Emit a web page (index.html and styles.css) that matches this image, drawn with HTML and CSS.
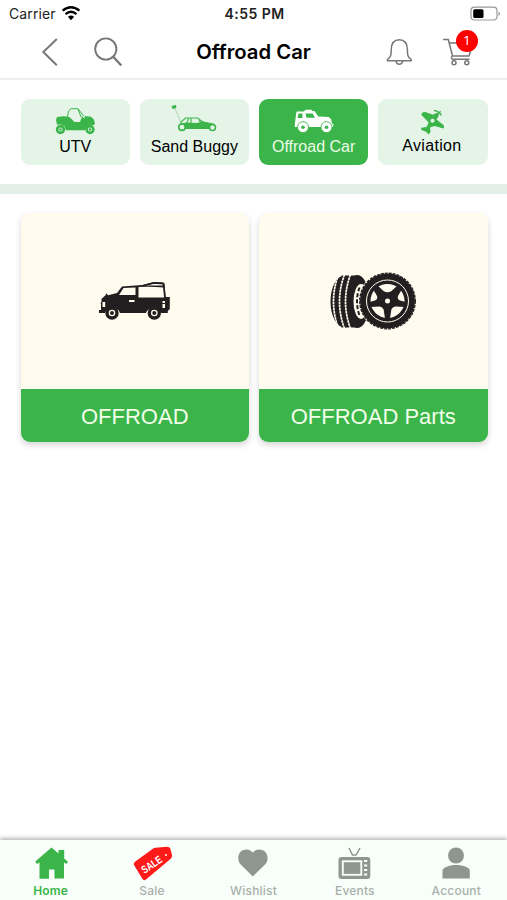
FILE: index.html
```html
<!DOCTYPE html>
<html lang="en">
<head>
<meta charset="utf-8">
<title>Offroad Car</title>
<link rel="stylesheet" href="styles.css">
</head>
<body>
<div class="app">
  <header class="top">
    <div class="status">
      <span class="carrier"><span class="carrier-name">Carrier</span>
        <svg width="20" height="16" viewBox="61 5.500 20 16" fill="none" stroke="#000" stroke-width="2.300"><path d="M62.600 10.200Q71 3.300 79.400 10.200"/><path d="M65.600 13.600Q71 9 76.400 13.600"/><path d="M71 19.700 67.900 16.300Q71 13.700 74.100 16.300Z" fill="#000" stroke="none"/></svg>
      </span>
      <span class="clock">4:55 PM</span>
      <svg class="battery" width="31" height="16" viewBox="469 5.500 31 16"><rect x="471" y="6.700" width="26" height="12.800" rx="3.500" fill="#fff" stroke="#999" stroke-width="1.200"/><rect x="473.200" y="8.700" width="10.300" height="8.800" rx="1.500"/><path d="M498.500 11v4.500Q500 14.600 500 13.200T498.500 11Z" fill="#999"/></svg>
    </div>
    <nav class="nav">
      <div class="nav-side nav-start">
        <svg width="20" height="32" viewBox="40 36 20 32" fill="none" stroke="#777" stroke-width="2"><path d="M56.800 39 43.300 52 56.800 65.300"/></svg>
        <svg class="search" width="32" height="32" viewBox="92 36 32 32" fill="none" stroke="#777" stroke-width="1.900"><circle cx="105.800" cy="49" r="10.600"/><path d="M113 56.500 121.300 65.500" stroke-width="2.300"/></svg>
      </div>
      <h1 class="title">Offroad Car</h1>
      <div class="nav-side nav-end">
        <svg width="28" height="30" viewBox="385 37 28 30" fill="none" stroke="#777" stroke-width="1.500"><path d="M387.500 60.700v-1.400c3.600-2.200 3.700-5 3.700-9.300 0-6.400 2.700-10.300 8.100-10.300s8.100 3.900 8.100 10.300c0 4.300.1 7.100 3.700 9.300v1.400Z"/><path d="M396 61c.5 4.300 6.100 4.300 6.600 0"/></svg>
        <div class="cart">
          <svg width="34" height="30" viewBox="442 37 34 30" fill="none" stroke="#777" stroke-width="1.500"><path d="M443 39.500h5.300l4.200 16.500h16.500l1.500-5M449.300 43h18M452.500 56c-2 1.500-1 3.300.8 3.300h16.200"/><circle cx="454" cy="62.700" r="2"/><circle cx="466.800" cy="62.700" r="2"/></svg>
          <span class="badge">1</span>
        </div>
      </div>
    </nav>
  </header>

  <section class="tabs">
    <div class="tab">
      <svg width="44" height="31" viewBox="53 104.500 44 31"><g fill="none" stroke="#3bb54a" stroke-width="1"><path d="M67.500 116 68.500 110.500 71 108.200h7L84 116M78 108.500l3 8"/></g><path fill="#3bb54a" d="M56 119.500 57 116.500l6-.8 4.500.3 2 .5 5 5h5.500L82 116l2.500 2 .5-2.500 6 .8 3 3 1 4-1.500 1.500-3.500-.5-4 3-1 2.500H66l-1.500-4-4-2-3.500.5-.5-2.500Z"/><circle cx="60.500" cy="129" r="3.400" fill="#e4f4e7" stroke="#3bb54a" stroke-width="2.600"/><circle cx="90" cy="129" r="3.400" fill="#e4f4e7" stroke="#3bb54a" stroke-width="2.600"/><circle cx="60.500" cy="129" r="1.200" fill="#3bb54a"/><circle cx="90" cy="129" r="1.200" fill="#3bb54a"/></svg>
      <span>UTV</span>
    </div>
    <div class="tab">
      <svg width="52" height="31" viewBox="168.500 104.500 52 31"><path d="M175 107 182 123" stroke="#a5c8ab" stroke-width=".8"/><path d="M172 105.500l4.500-1.200.3 3-3.500 1.400Z" fill="#3bb54a"/><path d="M181 122l5-4.500h12l6 4.500M189 118l-2 5M191.500 118v5M199 118l2 4" fill="none" stroke="#3bb54a" stroke-width="1.100"/><path d="M180 123 188 122l9 .5 7-1.500 10 2 2 2-6 3.500H185Z" fill="#3bb54a"/><circle cx="182.500" cy="126.700" r="3.200" fill="#e4f4e7" stroke="#3bb54a" stroke-width="1.600"/><circle cx="213" cy="127" r="3" fill="#e4f4e7" stroke="#3bb54a" stroke-width="1.500"/></svg>
      <span>Sand Buggy</span>
    </div>
    <div class="tab tab-active">
      <svg width="44" height="31" viewBox="292 104.500 44 31"><path fill="#fff" fill-rule="evenodd" d="M296.300 112 297 111h7l1.500-1.700h6l.8 1.300h2.200l3.800 5.500 10.500.5 2.500 2.500.6 4 1.500.5-.3 3H294.700l.2-3.500ZM298.500 113l-1 4.500h5V113ZM305.500 113l1 4.300h8.500L312.500 113Z"/><g fill="#fff" stroke="#3bb54a" stroke-width=".9"><circle cx="303" cy="126.700" r="5.500"/><circle cx="326.500" cy="126.700" r="5.500"/></g><circle cx="303" cy="126.700" r="1.800" fill="#3bb54a"/><circle cx="326.500" cy="126.700" r="1.800" fill="#3bb54a"/></svg>
      <span>Offroad Car</span>
    </div>
    <div class="tab">
      <svg width="32" height="31" viewBox="417 104.500 32 31"><path fill="#3bb54a" d="M421.500 114.500 421.800 112.500 424.500 111.300 433 114.300Q436 112 438.300 112.800L439 114Q438.500 117 436.500 119L443.500 124.500Q444.800 126.500 443.500 128L434.500 125.500 430 127 430.500 131.500 428.500 134 426 131.200 421 129.300 421.500 127.300 426.500 126.500 428.700 122Z"/><circle cx="432.500" cy="120.300" r="2" fill="#e4f4e7"/><path d="M434 110q4.500.2 7.500 5M437.500 113l3.300-2" fill="none" stroke="#3bb54a" stroke-width="1.300"/></svg>
      <span class="raised">Aviation</span>
    </div>
  </section>

  <main class="cards">
    <article class="card">
      <div class="card-art">
        <svg width="84" height="48" viewBox="93 277 84 48"><path fill="#231f20" fill-rule="evenodd" d="M99 310h2V304l-.5-1 1-1V299l2-2 2-1.700.8-2 1.700 2L117 293l5-6.500 20-1.500 12-3 9 .5 1.500 2 1 12.500V297h4.300v12l-2 2v2h-7q-3-5.500-8-5t-7 5H120q-2-5.500-7.500-5.500T105 313H99ZM119 295h16.500v-7.500l-12 .5ZM138.500 287V297.500h26l-.7-10q-12-1-25.300-.5ZM145 285.500h18l-.6-2h-8Z"/><path d="M144 285.500 154 282.800 163.500 283.500 165 298" fill="none" stroke="#231f20" stroke-width="1.800"/><path fill="#fffcef" d="M129 300h5.500v2H129ZM102.500 302h2.700v5h-2.700ZM162.500 301h2.500v2h-2.500ZM162.500 304h2.500v4h-2.500Z"/><circle cx="112" cy="313" r="5" fill="#fffcef" stroke="#231f20" stroke-width="3.400"/><circle cx="154.300" cy="313" r="5" fill="#fffcef" stroke="#231f20" stroke-width="3.400"/><circle cx="112" cy="313" r="2" fill="#231f20"/><circle cx="154.300" cy="313" r="2" fill="#231f20"/></svg>
      </div>
      <h2 class="card-label">OFFROAD</h2>
    </article>
    <article class="card">
      <div class="card-art">
        <svg width="96" height="64" viewBox="325.500 269.500 96 64"><g fill="#231f20"><ellipse cx="345" cy="302" rx="14" ry="26"/><path d="M342 276h16v52h-16Z"/><ellipse cx="358" cy="302" rx="12" ry="26.500"/></g><ellipse cx="361.500" cy="302" rx="7.500" ry="17.500" fill="#fffcef"/><path d="M360 288q-5 14 0 28" fill="none" stroke="#231f20" stroke-width="2" stroke-dasharray="4 2"/><g fill="none" stroke="#fffcef" stroke-width="1.700" stroke-dasharray="2.600 .5"><path d="M339 275Q329 302 339 329M345 275Q335 302 345 329M351 275Q341 302 351 329"/></g><circle cx="388" cy="301.500" r="29" fill="#fffcef"/><circle cx="388" cy="301.500" r="27.500" fill="#231f20"/><circle cx="388" cy="301.500" r="27.800" fill="none" stroke="#231f20" stroke-width="1.300" stroke-dasharray="3 1"/><circle cx="388" cy="301.500" r="21" fill="none" stroke="#fffcef"/><circle cx="388" cy="301.500" r="17" fill="#fffcef"/><path fill="#231f20" d="M377.500 285.500l6.500 6q4 2.500 8 0l6.500-6 4.300 3.500-4.300 7.500q-1 3 2 4.500l5.500 1.500-.8 5-9.200-.5q-3.500.5-4.200 3.500l-1.300 8.500h-5l-1.300-8.500q-.7-3-4.200-3.500l-9.200.5-.8-5 5.500-1.500q3-1.500 2-4.500l-4.300-7.500Z"/><circle cx="388" cy="301.500" r="2.500" fill="#fffcef"/></svg>
      </div>
      <h2 class="card-label">OFFROAD Parts</h2>
    </article>
  </main>

  <footer class="bar">
    <a class="item item-active"><svg width="38" height="38" viewBox="32 845 38 38"><path fill="#3bb54a" d="M51.500 847.500 58.500 853.500V850h5.700v8.500l3.800 3.300-1.500 2.200-2.500-1.500v16H54.500V869.500h-5.500v9.200h-9.500V862.500L37 864l-1.700-2.500Z"/></svg><span>Home</span></a>
    <a class="item"><svg width="42" height="38" viewBox="132 845 42 38"><path fill="#ff1a1a" d="M136 861.800 153.500 849q1.500-1.200 3-1.300l11.500-.9q2.500 0 3.300 1.700l1.700 6.500q.3 2-1 3.500L147 879.500q-2.200 1.500-3.500-.5L135 865q-1-1.800 1-3.200Z"/><circle cx="167" cy="855" r="1" fill="#fff"/><text class="tag" transform="translate(145.500 874) rotate(-34)" textLength="22.500" lengthAdjust="spacingAndGlyphs">SALE</text></svg><span>Sale</span></a>
    <a class="item"><svg width="38" height="38" viewBox="234.500 845 38 38"><path fill="#8d968f" d="M253.300 876.500 241 864.200c-4-4.200-3-14.700 6-14.700 3 0 5 1.500 6.300 3.200 1.300-1.700 3.300-3.200 6.300-3.200 9 0 10.400 10.500 6.200 14.700Z"/></svg><span>Wishlist</span></a>
    <a class="item"><svg width="38" height="38" viewBox="336 845 38 38"><path d="M349 848l3.500 7h3.500L360 848" fill="none" stroke="#8d968f" stroke-width="1.500"/><rect x="338.500" y="857" width="31.800" height="22" rx="3" fill="#8d968f"/><rect x="342.800" y="861.300" width="18.500" height="13.500" fill="#8d968f" stroke="#f8fffa" stroke-width="1.900"/><path d="M364 861h3.200M364 865.500h3.200M364 870h3.200M364 874.500h3.200" stroke="#f8fffa" stroke-width="1.800"/></svg><span>Events</span></a>
    <a class="item"><svg width="38" height="38" viewBox="437 845 38 38"><circle cx="456" cy="855.500" r="8" fill="#8d968f"/><path fill="#8d968f" d="M442.500 878.500v-8c0-3 6.500-5.500 13.700-5.500s13.600 2.500 13.600 5.500v8Z"/></svg><span>Account</span></a>
  </footer>
</div>
</body>
</html>
```

FILE: styles.css
```css
* { box-sizing: border-box; }
body { margin: 0; background: #fff; color: #000; font-family: "Liberation Sans", Arial, sans-serif; }
svg { display: block; flex: none; }
.app { height: 900px; display: flex; flex-direction: column; }

.top { height: 80px; border-bottom: 2px solid #efefef; font-family: Inter, sans-serif; }
.status { height: 27px; padding: 0 7px 0 9px; display: grid; grid-template-columns: 1fr auto 1fr; align-items: center; font-size: 14px; color: #222; }
.carrier { display: flex; align-items: center; gap: 5px; }
.carrier-name { width: 47px; white-space: nowrap; letter-spacing: .1px; }
.clock { font-weight: 600; font-size: 14px; letter-spacing: .45px; }
.battery { justify-self: end; }

.nav { height: 50px; padding: 0 31px; display: grid; grid-template-columns: 1fr auto 1fr; align-items: center; }
.nav-side { display: flex; align-items: center; gap: 32px; }
.nav-start { padding-left: 9px; }
.nav-end { justify-content: flex-end; gap: 29px; }
.title { margin: 0; font-size: 20.3px; line-height: 24px; font-weight: 600; white-space: nowrap; }
.cart { position: relative; }
.badge { position: absolute; left: 13.5px; top: -7px; width: 22px; height: 22px; border-radius: 50%; background: #f00; color: #fff; font-size: 12px; line-height: 22px; text-align: center; }

.tabs { height: 114px; padding: 18.5px 19.5px 0 20.5px; border-bottom: 10px solid #e3efe7; display: grid; grid-template-columns: repeat(4, 1fr); gap: 10px; flex: none; }
.tab { height: 66.5px; padding-top: 6px; border-radius: 9px; background: #e4f4e7; display: flex; flex-direction: column; align-items: center; font-size: 16px; line-height: 22px; white-space: nowrap; }
.tab-active { background: #3bb54a; color: #ecfbe9; }
.raised { margin: -.5px 2px 0 0; letter-spacing: .35px; }

.cards { padding: 19px 19.5px 0 20.5px; display: grid; grid-template-columns: 1fr 1fr; gap: 10px; flex: 1; align-content: start; }
.card { height: 229px; border-radius: 9px; background: #fffcef; overflow: hidden; box-shadow: 0 3px 6px rgba(0, 0, 0, .17); display: flex; flex-direction: column; }
.card-art { height: 175.5px; flex: none; display: flex; align-items: center; justify-content: center; }
.card-label { height: 53.5px; margin: 0; background: #3bb54a; color: #f1fde8; font-size: 22px; line-height: 55px; font-weight: 400; text-align: center; }

.bar { height: 60px; padding-top: 5px; background: #f8fffa; box-shadow: 0 -2px 4px rgba(0, 0, 0, .28); display: grid; grid-template-columns: repeat(5, 1fr); font-family: Inter, sans-serif; font-size: 12px; font-weight: 500; line-height: 15px; color: #a9afab; }
.item { display: flex; flex-direction: column; align-items: center; letter-spacing: .2px; }
.item-active { color: #3bb54a; font-weight: 600; }
.tag { font: 700 11px "Liberation Sans", sans-serif; fill: #fff; }
```
